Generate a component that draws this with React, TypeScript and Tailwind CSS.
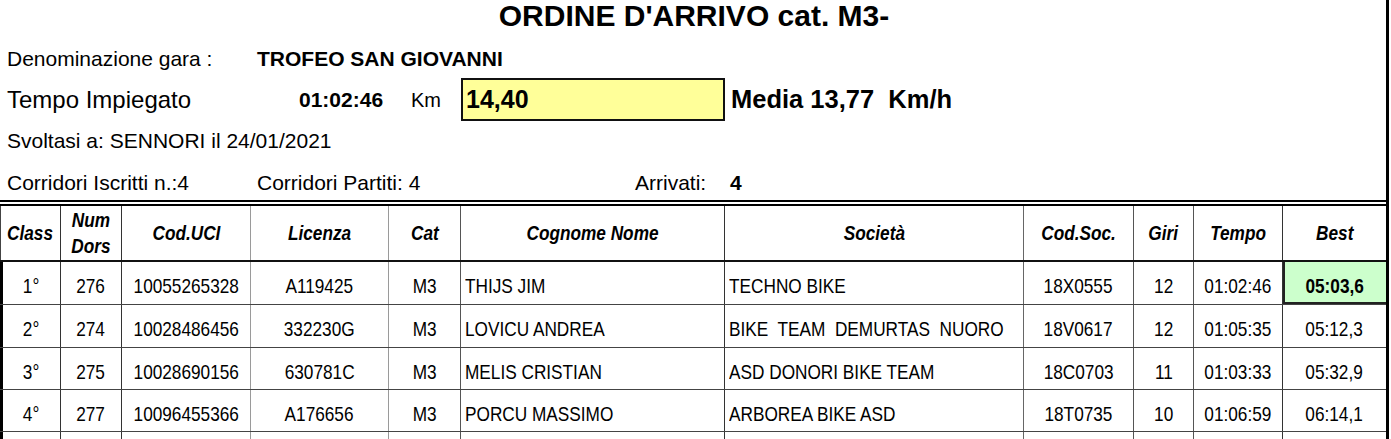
import React from "react";

const colW = "grid grid-cols-[60px_61px_129px_138px_72px_264px_299px_110px_60px_89px_104px]";

const lineCls = [
  "",
  "border-l border-[#333]",
  "border-l border-[#333]",
  "border-l border-[#9a9a9a]",
  "border-l border-[#9a9a9a]",
  "border-l border-[#555]",
  "border-l border-[#333]",
  "border-l border-[#666]",
  "border-l border-[#555]",
  "border-l border-[#555]",
  "border-l border-[#333]",
];

const rows = [
  ["1°", "276", "10055265328", "A119425", "M3", "THIJS JIM", "TECHNO BIKE", "18X0555", "12", "01:02:46", "05:03,6"],
  ["2°", "274", "10028486456", "332230G", "M3", "LOVICU ANDREA", "BIKE  TEAM  DEMURTAS  NUORO", "18V0617", "12", "01:05:35", "05:12,3"],
  ["3°", "275", "10028690156", "630781C", "M3", "MELIS CRISTIAN", "ASD DONORI BIKE TEAM", "18C0703", "11", "01:03:33", "05:32,9"],
  ["4°", "277", "10096455366", "A176656", "M3", "PORCU MASSIMO", "ARBOREA BIKE ASD", "18T0735", "10", "01:06:59", "06:14,1"],
];

const rowH = ["h-[43px]", "h-[43px]", "h-[42px]", "h-[42px]"];

function N({ children, left }: { children: React.ReactNode; left?: boolean }) {
  return (
    <span className={`inline-block whitespace-pre scale-x-[0.82] ${left ? "origin-left" : "origin-center"}`}>
      {children}
    </span>
  );
}

function HeaderCell({ i, children }: { i: number; children: React.ReactNode }) {
  const first = i === 0 ? "border-l border-[#444]" : lineCls[i];
  return (
    <div className={`${first} flex items-center justify-center text-center leading-[26px]`}>
      <N>{children}</N>
    </div>
  );
}

export default function App() {
  return (
    <div className="w-[1391px] h-[439px] overflow-hidden bg-white text-black font-['Liberation_Sans',Arial,sans-serif]">
      <div className="w-[1389px] h-full border-r-[3px] border-black">
        {/* Title */}
        <div className="h-[40px] flex justify-center">
          <h1 className="text-[30px] leading-[31px] font-bold pl-[2px]">ORDINE D'ARRIVO cat. M3-</h1>
        </div>

        {/* Denominazione */}
        <div className="h-[38px] flex items-center pl-[7px] text-[21px]">
          <span className="w-[250px]">Denominazione gara :</span>
          <span className="font-bold">TROFEO SAN GIOVANNI</span>
        </div>

        {/* Tempo */}
        <div className="h-[43px] flex items-center pl-[7px]">
          <span className="w-[292px] text-[24px]">Tempo Impiegato</span>
          <span className="w-[112px] text-[21px] font-bold">01:02:46</span>
          <span className="w-[50px] text-[20px]">Km</span>
          <div className="w-[264px] h-[43px] border-2 border-[#111] bg-[#ffff99] flex items-center pl-[3px]">
            <span className="text-[25px] font-bold">14,40</span>
          </div>
          <span className="ml-[6px] text-[25.5px] font-bold whitespace-pre">Media 13,77  Km/h</span>
        </div>

        {/* Svoltasi */}
        <div className="h-[40px] flex items-center pl-[7px] text-[21px]">
          <span>Svoltasi a: SENNORI il 24/01/2021</span>
        </div>

        {/* Corridori */}
        <div className="h-[39px] pt-[4px] flex items-center pl-[7px] text-[21px]">
          <span className="w-[250px]">Corridori Iscritti n.:4</span>
          <span className="w-[378px]">Corridori Partiti: 4</span>
          <span className="w-[95px]">Arrivati:</span>
          <span className="font-bold">4</span>
        </div>

        {/* Table */}
        <div className="w-[1386px]">
          <div className={`${colW} h-[62px] border-t-[6px] border-double border-t-black border-b-2 border-b-[#111] text-[21px] font-bold italic`}>
            <HeaderCell i={0}>Class</HeaderCell>
            <HeaderCell i={1}>
              Num
              <br />
              Dors
            </HeaderCell>
            <HeaderCell i={2}>Cod.UCI</HeaderCell>
            <HeaderCell i={3}>Licenza</HeaderCell>
            <HeaderCell i={4}>Cat</HeaderCell>
            <HeaderCell i={5}>Cognome Nome</HeaderCell>
            <HeaderCell i={6}>Società</HeaderCell>
            <HeaderCell i={7}>Cod.Soc.</HeaderCell>
            <HeaderCell i={8}>Giri</HeaderCell>
            <HeaderCell i={9}>Tempo</HeaderCell>
            <HeaderCell i={10}>Best</HeaderCell>
          </div>

          {rows.map((r, ri) => (
            <div key={ri} className={`${colW} ${rowH[ri]} border-b border-[#444] text-[21px]`}>
              {r.map((c, ci) => {
                const border = ci === 0 ? "border-l-[3px] border-black" : lineCls[ci];
                const left = ci === 5 || ci === 6;
                const align = left ? "justify-start pl-[4px]" : "justify-center";
                const green =
                  ri === 0 && ci === 10
                    ? "bg-[#ccffcc] font-bold shadow-[inset_2px_0_0_#222,inset_0_-2px_0_#222]"
                    : "";
                return (
                  <div key={ci} className={`${border} ${align} ${green} flex items-center pt-[6px] min-w-0`}>
                    <N left={left}>{c}</N>
                  </div>
                );
              })}
            </div>
          ))}

          <div className={`${colW} h-[20px]`}>
            {lineCls.map((l, ci) => (
              <div key={ci} className={ci === 0 ? "border-l-[3px] border-black" : l} />
            ))}
          </div>
        </div>
      </div>
    </div>
  );
}
